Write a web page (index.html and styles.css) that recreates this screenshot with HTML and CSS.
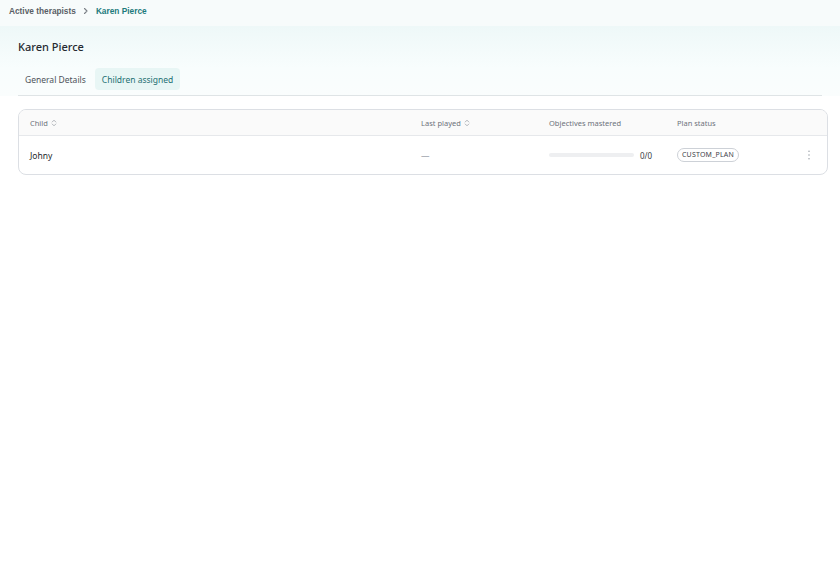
FILE: index.html
```html
<!DOCTYPE html>
<html lang="en">
<head>
    <meta charset="UTF-8">
    <meta name="viewport" content="width=device-width, initial-scale=1.0">
    <title>Karen Pierce</title>
    <link rel="stylesheet" href="styles.css">
</head>
<body>
    <nav class="breadcrumb">
        <span class="crumb">Active therapists</span>
        <svg class="crumb-sep" width="8" height="8" viewBox="0 0 8 8" fill="none" stroke="currentColor" stroke-width="1.1" stroke-linecap="round" stroke-linejoin="round">
            <polyline points="2.5 1.5 5 4 2.5 6.5"></polyline>
        </svg>
        <span class="crumb current">Karen Pierce</span>
    </nav>

    <header class="page-header">
        <h1 class="page-title">Karen Pierce</h1>
        <div class="tabs">
            <button class="tab">General Details</button>
            <button class="tab active">Children assigned</button>
        </div>
    </header>

    <main class="content">
        <div class="table-card">
            <div class="table-row table-head">
                <div class="cell">Child
                    <svg class="sort" width="6" height="8" viewBox="0 0 6 8" fill="none" stroke="currentColor" stroke-width="0.8" stroke-linecap="round" stroke-linejoin="round">
                        <polyline points="1.2 3 3 1.2 4.8 3"></polyline>
                        <polyline points="1.2 5 3 6.8 4.8 5"></polyline>
                    </svg>
                </div>
                <div class="cell">Last played
                    <svg class="sort" width="6" height="8" viewBox="0 0 6 8" fill="none" stroke="currentColor" stroke-width="0.8" stroke-linecap="round" stroke-linejoin="round">
                        <polyline points="1.2 3 3 1.2 4.8 3"></polyline>
                        <polyline points="1.2 5 3 6.8 4.8 5"></polyline>
                    </svg>
                </div>
                <div class="cell">Objectives mastered</div>
                <div class="cell">Plan status</div>
                <div class="cell"></div>
            </div>
            <div class="table-row">
                <div class="cell name">Johny</div>
                <div class="cell muted">&mdash;</div>
                <div class="cell progress">
                    <div class="progress-track"><div class="progress-fill" style="width: 0%"></div></div>
                    <span class="progress-label">0/0</span>
                </div>
                <div class="cell"><span class="badge">CUSTOM_PLAN</span></div>
                <div class="cell actions">
                    <svg width="4" height="12" viewBox="0 0 4 12" fill="#9aa0a8">
                        <circle cx="2" cy="2.3" r="0.75"></circle>
                        <circle cx="2" cy="6" r="0.75"></circle>
                        <circle cx="2" cy="9.7" r="0.75"></circle>
                    </svg>
                </div>
            </div>
        </div>
    </main>
</body>
</html>
```

FILE: styles.css
```css
* {
    margin: 0;
    padding: 0;
    box-sizing: border-box;
}

html, body {
    height: 100%;
    background-color: #fff;
    font-family: "Noto Sans", "Open Sans", sans-serif;
    color: #2b2f36;
}

.breadcrumb {
    height: 26px;
    display: flex;
    align-items: center;
    gap: 6px;
    padding: 0 9px 4px;
    background-color: #f7fbfb;
    font-family: "Liberation Sans", Arial, sans-serif;
    font-size: 8.3px;
    font-weight: bold;
}

.crumb {
    color: #5a5f66;
}

.crumb-sep {
    color: #7a7f86;
}

.crumb.current {
    color: #1d7a7c;
}

.page-header {
    padding: 14px 18px 0;
    background: linear-gradient(to bottom, #eef8f8 0%, #f8fdfd 60%, #fafdfd 100%);
}

.page-title {
    font-size: 11px;
    font-weight: 500;
    color: #262a30;
    line-height: 14px;
    margin-bottom: 14px;
}

.tabs {
    display: flex;
    gap: 2px;
    padding-bottom: 5px;
    border-bottom: 1px solid #dfe4e6;
}

.tab {
    border: none;
    background: transparent;
    font-family: inherit;
    font-size: 8.5px;
    color: #4d525a;
    padding: 0 7px;
    height: 22px;
    border-radius: 4px;
    cursor: pointer;
}

.tab.active {
    background-color: #e8f6f5;
    color: #1d6f72;
}

.content {
    padding: 13px 12px 0 18px;
}

.table-card {
    border: 1px solid #dcdfe4;
    border-radius: 8px;
    overflow: hidden;
}

.table-row {
    display: grid;
    grid-template-columns: 391px 128px 128px 1fr 36px;
    align-items: center;
    padding-left: 11px;
    height: 38px;
    font-size: 8.5px;
}

.table-head {
    height: 26px;
    background-color: #fafafa;
    border-bottom: 1px solid #e6e8eb;
    font-size: 7.5px;
    color: #6d727a;
}

.cell {
    display: flex;
    align-items: center;
}

.sort {
    color: #9ea3aa;
    margin-left: 3px;
}

.name {
    color: #23272d;
}

.muted {
    color: #9aa0a8;
}

.progress {
    gap: 6px;
}

.progress-track {
    width: 85px;
    height: 4px;
    border-radius: 2px;
    background-color: #eeeff1;
    overflow: hidden;
}

.progress-fill {
    height: 100%;
    background-color: #1d7a7c;
}

.progress-label {
    font-size: 8px;
    color: #3a3e45;
}

.badge {
    display: inline-block;
    font-size: 7px;
    color: #3e434a;
    letter-spacing: 0.2px;
    padding: 1px 4px;
    border: 1px solid #cdd1d7;
    border-radius: 8px;
    line-height: 10px;
}

.actions {
    justify-content: center;
}
```
